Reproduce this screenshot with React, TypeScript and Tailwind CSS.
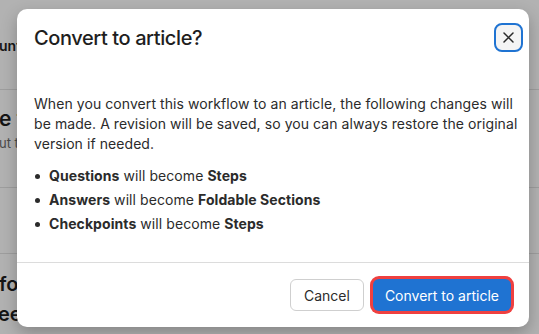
import React from "react";

export default function App() {
  const font = { fontFamily: "Inter, 'Noto Sans', sans-serif" };
  return (
    <div className="relative w-[539px] h-[334px] overflow-hidden bg-white" style={font}>
      {/* background page */}
      <div className="flex flex-col text-[#1f1f1f]">
        <div className="h-[90px] border-b border-[#e2e2e2] flex items-center pt-[2px]">
          <span className="ml-[-1px] text-[14px] font-semibold">unt settings</span>
        </div>
        <div className="h-[98px] border-b border-[#e2e2e2] flex flex-col pt-[15px]">
          <span className="ml-[-1px] text-[21px] leading-[28px] font-semibold">e title</span>
          <span className="ml-[-1px] text-[13px] leading-[20px] text-[#6b6b6b]">ut this workflow</span>
        </div>
        <div className="h-[66px] border-b border-[#e2e2e2]"></div>
        <div className="flex flex-col pt-[15px]">
          <span className="ml-[-1px] text-[20px] leading-[30px] font-semibold">folder</span>
          <span className="ml-[-2px] text-[20px] leading-[30px] font-semibold">eeds</span>
        </div>
      </div>

      {/* overlay */}
      <div className="absolute inset-0 bg-black/30"></div>

      {/* modal */}
      <div className="absolute left-[17px] top-[9px] w-[512px] h-[318px] bg-white rounded-[10px] shadow-[0_6px_16px_rgba(0,0,0,0.25)] flex flex-col">
        <div className="flex items-center justify-between pl-[17px] pr-[6px] pt-[14px]">
          <h2 className="text-[20px] leading-[28px] font-medium tracking-[-0.4px] text-[#1e1e1e]">Convert to article?</h2>
          <button className="w-[29px] h-[29px] rounded-[8px] border-2 border-[#1f73d2] bg-[#f4f4f4] flex items-center justify-center">
            <svg width="11" height="11" viewBox="0 0 11 11" fill="none" stroke="#2a2a2a" strokeWidth="1.5" strokeLinecap="round">
              <path d="M1 1L10 10M10 1L1 10" />
            </svg>
          </button>
        </div>
        <div className="pl-[17px] pr-[10px] pt-[42px] text-[14px] leading-[20px] tracking-[0.07px] text-[#2b2b2b]">
          <p>
            When you convert this workflow to an article, the following changes will be made. A revision will be saved, so you can always restore the original version if needed.
          </p>
          <ul className="mt-[12px] flex flex-col gap-[4px]">
            <li className="flex items-center">
              <span className="w-[5px] h-[5px] rounded-full bg-[#2b2b2b] ml-[1px] mr-[9px]"></span>
              <span><b className="font-bold">Questions</b> will become <b className="font-bold">Steps</b></span>
            </li>
            <li className="flex items-center">
              <span className="w-[5px] h-[5px] rounded-full bg-[#2b2b2b] ml-[1px] mr-[9px]"></span>
              <span><b className="font-bold">Answers</b> will become <b className="font-bold">Foldable Sections</b></span>
            </li>
            <li className="flex items-center">
              <span className="w-[5px] h-[5px] rounded-full bg-[#2b2b2b] ml-[1px] mr-[9px]"></span>
              <span><b className="font-bold">Checkpoints</b> will become <b className="font-bold">Steps</b></span>
            </li>
          </ul>
        </div>
        <div className="mt-auto border-t border-[#dcdcdc] flex justify-end items-center gap-[9px] pr-[18px] h-[65px]">
          <button className="h-[32px] px-[13px] rounded-[6px] border border-[#cfcfcf] bg-white text-[14px] text-[#2b2b2b]">
            Cancel
          </button>
          <button className="h-[32px] px-[12px] rounded-[6px] bg-[#1f73d2] text-[14px] text-white ring-[3px] ring-[#ef4040]">
            Convert to article
          </button>
        </div>
      </div>
    </div>
  );
}
